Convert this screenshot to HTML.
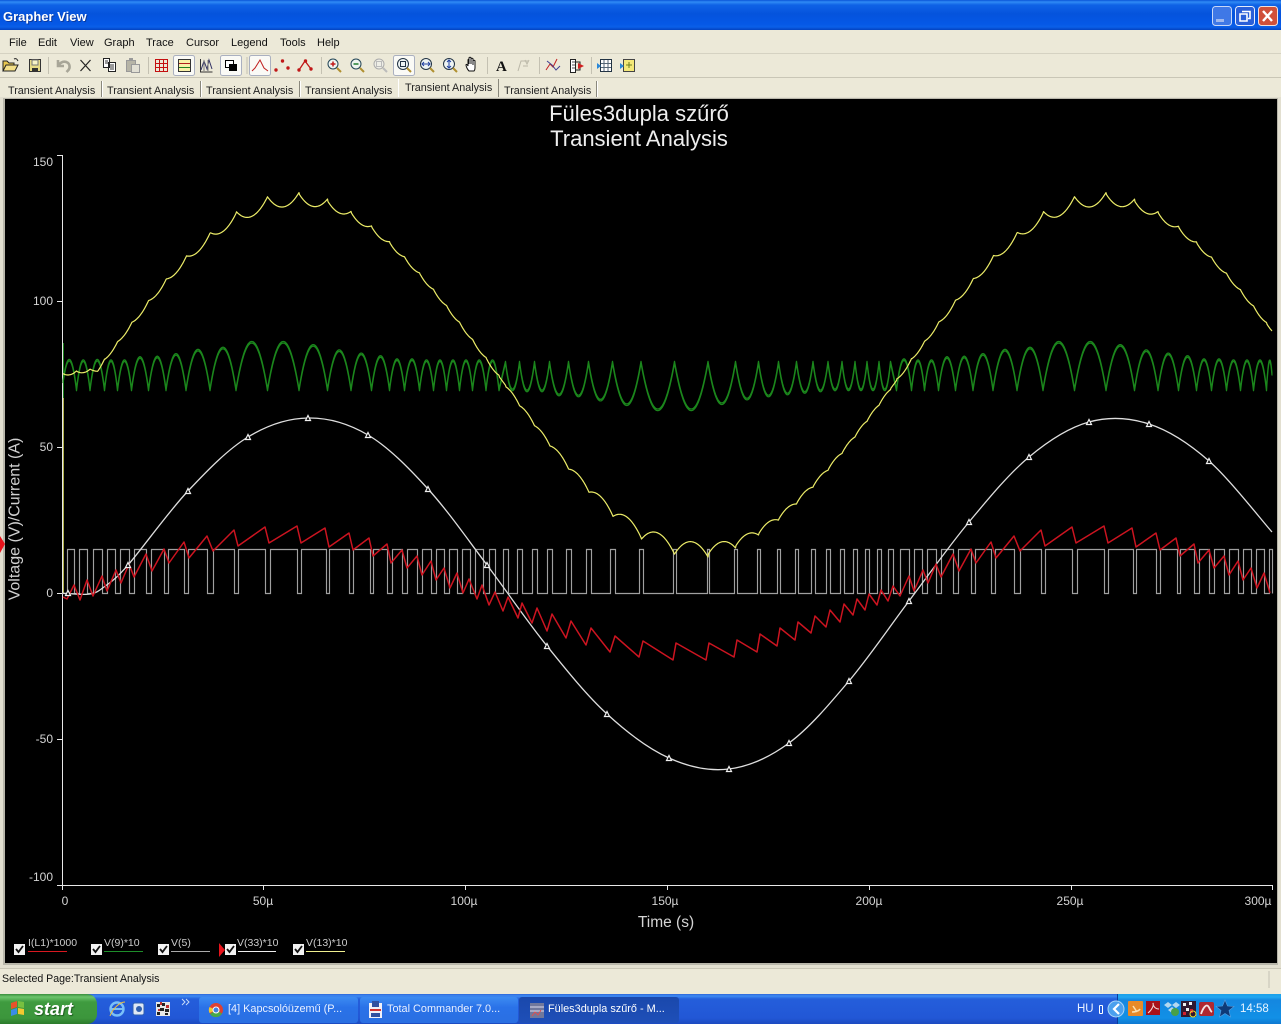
<!DOCTYPE html>
<html>
<head>
<meta charset="utf-8">
<title>Grapher View</title>
<style>
html,body{margin:0;padding:0;background:#ece9d8;}
body{width:1281px;height:1024px;position:relative;overflow:hidden;font-family:"Liberation Sans",sans-serif;}
.a{position:absolute;white-space:nowrap;}
#title{left:0;top:0;width:1281px;height:30px;background:linear-gradient(#0a55d8 0,#2f8bf5 2px,#0f62e6 5px,#0553dc 14px,#0558e6 24px,#0a5fe8 27px,#0342c0 30px);}
.m{font-size:11px;color:#111;top:36px;line-height:13px;}
.t{font-size:10.8px;color:#222;top:84px;line-height:13px;}
.s{top:81px;width:1px;height:16px;background:#8a887c;border-right:1px solid #fff;}
#chart{left:5px;top:99px;width:1272px;height:864px;background:#000;}
.yl{color:#d4d4d4;font-size:12px;width:40px;text-align:right;left:14px;line-height:14px;}
.xl{color:#d4d4d4;font-size:12px;top:894px;line-height:14px;text-align:center;width:50px;}
.lg{color:#ccc;font-size:10.5px;top:937px;line-height:12px;}
.tb{top:997px;height:26px;border-radius:3px;color:#e8f0ff;font-size:10.9px;line-height:25px;box-sizing:border-box;background:linear-gradient(#3d8bf2,#2a72e8 40%,#2a6fe2);}
</style>
</head>
<body>
<div class="a" id="title"></div>
<div class="a" style="left:3px;top:9px;color:#fff;font-weight:bold;font-size:13px;line-height:15px;text-shadow:1px 1px 0 #0a3aa0;">Grapher View</div>
<svg class="a" style="left:1210px;top:4px" width="71" height="24" viewBox="0 0 71 24">
<rect x="2.5" y="2.5" width="19" height="19" rx="3" fill="#3f78e6" stroke="#c8d8f8"/>
<rect x="6" y="15" width="8" height="3" fill="#9fb8ee"/>
<rect x="25.5" y="2.5" width="19" height="19" rx="3" fill="#2a5fd8" stroke="#e4ecfc"/>
<path d="M32 7.5h8v7h-2M30 10h7v7h-7z" fill="none" stroke="#fff" stroke-width="1.6"/>
<rect x="48.5" y="2.5" width="19" height="19" rx="3" fill="#d0503a" stroke="#f0e0dc"/>
<path d="M53 7l9 10M62 7l-9 10" stroke="#fff" stroke-width="2.4"/>
</svg>
<div class="a" style="left:0;top:30px;width:1281px;height:23px;background:#ece9d8;"></div>
<div class="a m" style="left:9px;top:37px">File</div>
<div class="a m" style="left:38px;top:37px">Edit</div>
<div class="a m" style="left:70px;top:37px">View</div>
<div class="a m" style="left:104px;top:37px">Graph</div>
<div class="a m" style="left:146px;top:37px">Trace</div>
<div class="a m" style="left:186px;top:37px">Cursor</div>
<div class="a m" style="left:231px;top:37px">Legend</div>
<div class="a m" style="left:280px;top:37px">Tools</div>
<div class="a m" style="left:317px;top:37px">Help</div>
<div class="a" style="left:0;top:53px;width:1281px;height:1px;background:#d5d2c2;"></div>
<div class="a" style="left:0;top:77px;width:1281px;height:1px;background:#c9c6b6;"></div>

<svg class="a" style="left:0;top:54px" width="660" height="23" viewBox="0 54 660 23">
<g fill="#fafaf6" stroke="#aab0c0">
<rect x="173.500" y="55.500" width="21" height="20" rx="2"/><rect x="220.500" y="55.500" width="21" height="20" rx="2"/>
<rect x="249.500" y="55.500" width="21" height="20" rx="2"/><rect x="393.500" y="55.500" width="21" height="20" rx="2"/>
</g>
<g stroke="#c4c1b2"><path d="M48.500 57v17M148.500 57v17M247 57v17M321.500 57v17M487.500 57v17M539.500 57v17M591.500 57v17"/></g>
<!-- open -->
<path d="M3 71V61h4l2 2h5v2" fill="#e8c850" stroke="#222"/><path d="M3 71l3-6h12l-3 6z" fill="#f4e088" stroke="#222"/><path d="M14 59c2-1 3 0 4 2" stroke="#222" fill="none"/>
<!-- save -->
<rect x="29.500" y="59.500" width="11" height="12" fill="#e8dc88" stroke="#333"/><rect x="32" y="60" width="6" height="5" fill="#f8f4c8" stroke="#777"/><rect x="32" y="68" width="6" height="3" fill="#333"/>
<!-- undo -->
<path d="M58 60v6h6M58.500 65c5-6 12-3 11 3-.5 2-2 3-3 4" fill="none" stroke="#a8a698" stroke-width="2.600"/>
<!-- cut -->
<path d="M80.500 60l10 11M90.500 60l-10 11" stroke="#222" stroke-width="1.200"/>
<!-- copy -->
<path d="M103.500 58.500h6v9h-6zM108.500 62.500h7v9h-7z" fill="#fff" stroke="#222"/><path d="M105 61h3M105 63h3M110 65h4M110 67h4M110 69h4" stroke="#333"/>
<!-- paste -->
<rect x="126.500" y="60.500" width="9" height="11" fill="#b6b4a6" stroke="#999"/><rect x="131.500" y="64.500" width="8" height="8" fill="#e2e0d4" stroke="#999"/><rect x="129" y="58" width="4" height="3" fill="#999"/>
<!-- grid -->
<path d="M155 59.500h13M155 63.500h13M155 67.500h13M155 71.500h13M155.500 59v13M159.500 59v13M163.500 59v13M167.500 59v13" stroke="#c41010"/>
<!-- legend -->
<rect x="178.500" y="59.500" width="12" height="12" fill="#f8f0a8" stroke="#333"/><path d="M179 63.500h11" stroke="#b02020"/><path d="M179 67.500h11" stroke="#208020"/>
<!-- traces -->
<path d="M200.500 59v13h12" fill="none" stroke="#333"/><path d="M201 70l3-9 3 8 2-9 3 9" fill="none" stroke="#336"/><path d="M204 60v11M208 60v11" stroke="#777"/>
<!-- bw -->
<rect x="225.500" y="60.500" width="8" height="7" fill="#fff" stroke="#000"/><rect x="229" y="64" width="8" height="7" fill="#000"/>
<!-- curve -->
<path d="M252 71l3-3 5-8 4 8 4 3" fill="none" stroke="#c02020"/>
<!-- dots -->
<g fill="#c01818"><circle cx="276" cy="70" r="1.700"/><circle cx="282.500" cy="61" r="1.700"/><circle cx="288" cy="68" r="1.700"/>
<circle cx="299" cy="70" r="1.700"/><circle cx="305.500" cy="61" r="1.700"/><circle cx="311" cy="69" r="1.700"/></g>
<path d="M299 70l6-9 6 8" fill="none" stroke="#c01818" stroke-width="1.300"/>
<!-- zooms -->
<g fill="#eef4f0" stroke="#245"><circle cx="333" cy="64" r="5"/><circle cx="356" cy="64" r="5"/></g>
<path d="M330.500 64h5" stroke="#c01818" stroke-width="1.500"/><path d="M333 61.500v5" stroke="#c01818" stroke-width="1.500"/>
<path d="M353.500 64h5" stroke="#208030" stroke-width="1.500"/>
<path d="M337 68l4 4M360 68l4 4" stroke="#b09030" stroke-width="2"/>
<circle cx="379" cy="64" r="5" fill="#eeeee6" stroke="#aaa"/><path d="M383 68l4 4" stroke="#bbb" stroke-width="2"/><rect x="376.500" y="61.500" width="5" height="5" fill="none" stroke="#bbb"/>
<circle cx="403" cy="64" r="5.500" fill="#eef4f4" stroke="#234"/><rect x="400.500" y="61.500" width="5" height="5" fill="none" stroke="#234"/><path d="M407 68l4 4" stroke="#b09030" stroke-width="2"/>
<circle cx="426" cy="64" r="5.500" fill="#eef4f4" stroke="#234"/><path d="M422 64h8" stroke="#2040a0"/><path d="M424 62l-2 2 2 2M428 62l2 2-2 2" fill="none" stroke="#2040a0"/><path d="M430 68l4 4" stroke="#b09030" stroke-width="2"/>
<circle cx="449" cy="64" r="5.500" fill="#eef4f4" stroke="#234"/><path d="M449 60v8M447 62l2-2 2 2M447 66l2 2 2-2" fill="none" stroke="#2040a0"/><path d="M453 68l4 4" stroke="#b09030" stroke-width="2"/>
<!-- hand -->
<path d="M469 71c-2-2-3-5-3-6s1-1 2 1v-6c0-1 1-1 1 0v4-6c0-1 2-1 2 0v6-5c0-1 2-1 2 0v6-4c0-1 2-1 2 0v7c0 2-1 3-1 3z" fill="#fff" stroke="#111"/>
<!-- A -->
<text x="496" y="71" font-family="Liberation Serif,serif" font-weight="bold" font-size="15" fill="#111">A</text>
<path d="M518 71l3-10h7M523 66h5" fill="none" stroke="#bbb8a8"/><path d="M525 60l2 4 2-4" fill="none" stroke="#bbb8a8"/>
<!-- trace edit -->
<path d="M546 70l4-6 3 3 4-8" fill="none" stroke="#c02020"/><path d="M547 61l5 4 4 5 4-4" fill="none" stroke="#404090"/>
<path d="M570.500 59.500h5v13h-5z" fill="#fff" stroke="#222"/><path d="M576 62h4v3M576 70h4v-3" fill="none" stroke="#222"/><path d="M578 63l6 3-6 3z" fill="#d02020"/><path d="M572 62h3M572 65h3M572 68h3" stroke="#555"/>
<!-- export -->
<rect x="600.500" y="59.500" width="11" height="12" fill="#fff" stroke="#234"/><path d="M604 60v11M608 60v11M601 63.500h10M601 67.500h10" stroke="#567"/><path d="M597 63l4 3-4 3z" fill="#2a88d8"/>
<rect x="623.500" y="59.500" width="11" height="12" fill="#f4e878" stroke="#444"/><path d="M626 65h6M629 62v6" stroke="#708020"/><path d="M620 63l4 3-4 3z" fill="#2a88d8"/>
</svg>

<div class="a t" style="left:8px;top:85px">Transient Analysis</div><div class="a s" style="left:101px"></div>
<div class="a t" style="left:107px;top:85px">Transient Analysis</div><div class="a s" style="left:200px"></div>
<div class="a t" style="left:206px;top:85px">Transient Analysis</div><div class="a s" style="left:299px"></div>
<div class="a t" style="left:305px;top:85px">Transient Analysis</div>
<div class="a" style="left:398px;top:79px;width:101px;height:20px;background:#ece9d8;border-left:1px solid #fff;border-right:1px solid #8a887c;box-sizing:border-box;"></div>
<div class="a t" style="left:405px;top:82px">Transient Analysis</div>
<div class="a t" style="left:504px;top:85px">Transient Analysis</div><div class="a s" style="left:596px"></div>

<div class="a" style="left:0;top:97px;width:1281px;height:871px;background:#e2dfd0;"></div>
<div class="a" style="left:3px;top:98px;width:1275px;height:867px;background:#b8b6aa;"></div>
<div class="a" id="chart"></div>

<svg class="a" style="left:0;top:0;pointer-events:none" width="1281" height="1024" viewBox="0 0 1281 1024" fill="none">
<path d="M0 536l5 8-5 9z" fill="#e8141c"/>
<path d="M63 375V593" stroke="#e8e860" stroke-width="1.500"/>
<path d="M63 343V398" stroke="#1a7f1a" stroke-width="2"/>
<path d="M62.500 155V885.500H1272.500M57 155.500h5M57 301.500h5M57 447.500h5M57 593.500h5M57 739.500h5M57 885.500h5M62.500 885v5M263.500 885v5M465.500 885v5M667.500 885v5M869.500 885v5M1071.500 885v5M1272.500 885v5" stroke="#e8e8e8"/>
<path id="pg" stroke="#1b861c" stroke-width="1.300" stroke-linejoin="round"/>
<path id="ps" stroke="#a0a0a0" stroke-width="1.150"/>
<path id="py" stroke="#ecec68" stroke-width="1.200" stroke-linejoin="round"/>
<path id="pw" stroke="#dedede" stroke-width="1.300" stroke-linejoin="round"/>
<path id="pr" stroke="#cc1420" stroke-width="1.500" stroke-linejoin="round"/>
<g id="mk" stroke="#efefef" stroke-width="1.200"></g>
<path d="M219 943l6 7-6 7z" fill="#e8141c"/>
<!-- legend checks -->
<g>
<rect x="14" y="944" width="11" height="11" fill="#f2f2f2"/><rect x="91" y="944" width="11" height="11" fill="#f2f2f2"/><rect x="158" y="944" width="11" height="11" fill="#f2f2f2"/><rect x="225" y="944" width="11" height="11" fill="#f2f2f2"/><rect x="293" y="944" width="11" height="11" fill="#f2f2f2"/>
<path d="M16 949l2.500 3 4.500-6M93 949l2.500 3 4.500-6M160 949l2.500 3 4.500-6M227 949l2.500 3 4.500-6M295 949l2.500 3 4.500-6" stroke="#111" stroke-width="1.800"/>
</g>
<path d="M28 951.500h39" stroke="#d81820"/>
<path d="M104 951.500h39" stroke="#1e8e2a"/>
<path d="M171 951.500h39" stroke="#aaa"/>
<path d="M238 951.500h38" stroke="#eee"/>
<path d="M306 951.500h39" stroke="#f0f090"/>
</svg>

<div class="a" style="left:0;top:0;width:1281px;height:1024px;pointer-events:none;">
<div class="a" style="left:439px;top:101px;width:400px;text-align:center;color:#eeeeee;font-size:22px;line-height:25px;">Füles3dupla szűrő</div>
<div class="a" style="left:439px;top:126px;width:400px;text-align:center;color:#eeeeee;font-size:22px;line-height:25px;">Transient Analysis</div>
<div class="a yl" style="left:13px;top:155px">150</div>
<div class="a yl" style="left:13px;top:294px">100</div>
<div class="a yl" style="left:13px;top:440px">50</div>
<div class="a yl" style="left:13px;top:586px">0</div>
<div class="a yl" style="left:13px;top:732px">-50</div>
<div class="a yl" style="left:13px;top:870px">-100</div>
<div class="a" style="left:-67px;top:510px;width:165px;height:18px;line-height:18px;text-align:center;color:#d0d0d0;font-size:16px;transform:rotate(-90deg);">Voltage (V)/Current (A)</div>
<div class="a xl" style="left:40px">0</div>
<div class="a xl" style="left:238px">50µ</div>
<div class="a xl" style="left:439px">100µ</div>
<div class="a xl" style="left:640px">150µ</div>
<div class="a xl" style="left:844px">200µ</div>
<div class="a xl" style="left:1045px">250µ</div>
<div class="a xl" style="left:1233px">300µ</div>
<div class="a" style="left:566px;top:914px;width:200px;text-align:center;color:#d4d4d4;font-size:15.500px;line-height:18px;">Time (s)</div>
<div class="a lg" style="left:28px">I(L1)*1000</div>
<div class="a lg" style="left:104px">V(9)*10</div>
<div class="a lg" style="left:171px">V(5)</div>
<div class="a lg" style="left:237px">V(33)*10</div>
<div class="a lg" style="left:306px">V(13)*10</div>
</div>

<div class="a" style="left:0;top:968px;width:1281px;height:22px;background:#ece9d8;border-top:1px solid #c9c6b6;box-sizing:border-box;"></div>
<div class="a" style="left:2px;top:973px;font-size:10.6px;line-height:13px;color:#111;">Selected Page:Transient Analysis</div>
<div class="a" style="left:1268px;top:971px;width:2px;height:17px;background:#d8d5c6;"></div>

<div class="a" style="left:0;top:994px;width:1281px;height:30px;background:linear-gradient(#2c66d8 0,#3f8cf3 2px,#245edb 5px,#2257d6 24px,#1c4ac0 30px);"></div>
<div class="a" style="left:0;top:994px;width:97px;height:30px;border-radius:0 10px 10px 0;background:linear-gradient(#388e3c 0,#6cc46c 3px,#3f9b3f 8px,#3c963c 24px,#2b7a2b 30px);"></div>
<svg class="a" style="left:0;top:994px" width="200" height="30" viewBox="0 0 200 30">
<path d="M11 9l6-2v6l-6 2z" fill="#e8522a"/><path d="M18 7l6 1v6l-6-1z" fill="#78c040"/><path d="M11 16l6-2v6l-6 2z" fill="#3a8ce8"/><path d="M18 14l6 1v6l-6-1z" fill="#f4c830"/>
<circle cx="117" cy="15" r="6.500" fill="none" stroke="#7ac0f8" stroke-width="2.400"/><path d="M111 15h12" stroke="#7ac0f8" stroke-width="2"/><path d="M110 22c3-8 10-14 15-14" fill="none" stroke="#f0c040"/>
<rect x="133" y="9" width="11" height="12" rx="2" fill="#dfe8f4" stroke="#3060b0"/><circle cx="139" cy="15" r="3" fill="#3060b0"/>
<rect x="156" y="8" width="14" height="14" fill="#e8e8e8"/><path d="M157 10h3v3h-3zM162 9h3v3h-3zM160 14h4v3h-4zM165 15h4v3h-4zM157 18h3v3h-3zM165 19h3v2h-3z" fill="#222"/><path d="M160 8h2v3h-2zM166 11h3v3h-3zM158 15h2v2h-2z" fill="#c03030"/>
<path d="M182 5l3 3-3 3M186 5l3 3-3 3" fill="none" stroke="#c8dcf8"/>
</svg>
<div class="a" style="left:34px;top:998px;color:#fff;font-style:italic;font-weight:bold;font-size:18px;line-height:22px;text-shadow:1px 1px 1px #1c5c1c;">start</div>

<div class="a tb" style="left:199px;width:159px;padding-left:29px;">[4] Kapcsolóüzemű (P...</div>
<div class="a tb" style="left:360px;width:158px;padding-left:27px;">Total Commander 7.0...</div>
<div class="a tb" style="left:519px;width:160px;padding-left:29px;background:linear-gradient(#1a48ac,#1e4fb8);color:#fff;">Füles3dupla szűrő - M...</div>
<svg class="a" style="left:199px;top:997px" width="480" height="26" viewBox="199 997 480 26">
<circle cx="216" cy="1010" r="7" fill="#e04030"/><path d="M216 1010l6 3.500a7 7 0 0 1-12 0.500z" fill="#48a848"/><path d="M216 1010l-6.500 3a7 7 0 0 1 0-6z" fill="#f0c830"/><circle cx="216" cy="1010" r="3" fill="#4080e0" stroke="#fff"/>
<rect x="369" y="1003" width="13" height="15" fill="#f0f0f8"/><rect x="372" y="1001" width="7" height="6" fill="#3050a0"/><path d="M370 1010h11" stroke="#d03030" stroke-width="2"/><rect x="371" y="1013" width="9" height="4" fill="#3050a0"/>
<rect x="530" y="1003" width="14" height="15" fill="#70789c"/><path d="M530 1007h14M530 1011h14" stroke="#dde"/><path d="M532 1016l3-4 3 3 3-5" fill="none" stroke="#e05050"/>
</svg>

<div class="a" style="left:1117px;top:994px;width:164px;height:30px;background:linear-gradient(#1ba0e8 0,#22a8f2 3px,#1487e0 6px,#1290e6 24px,#0f78d0 30px);border-left:1px solid #0c3c9c;box-sizing:border-box;"></div>
<div class="a" style="left:1077px;top:1002px;color:#e8f0ff;font-size:11.500px;line-height:14px;">HU</div>
<div class="a" style="left:1099px;top:1005px;width:4px;height:9px;border:1px solid #fff;border-radius:1px;box-sizing:border-box;"></div>
<svg class="a" style="left:1106px;top:995px" width="130" height="28" viewBox="1106 995 130 28">
<circle cx="1116" cy="1009" r="8" fill="#4aa0ee" stroke="#a8d4f8"/><path d="M1119 1004l-5 5 5 5" fill="none" stroke="#fff" stroke-width="2.200"/>
<rect x="1128" y="1001" width="15" height="15" rx="1" fill="#e88a28"/><path d="M1132 1012c3 0 7-1 8-3M1133 1006l4 6" stroke="#fbe0b0" stroke-width="1.500" fill="none"/>
<rect x="1146" y="1001" width="14" height="14" fill="#a81018"/><path d="M1148 1013c4-3 6-8 5-10 0 3 2 6 6 6" fill="none" stroke="#f0d8d8"/>
<path d="M1164 1005l4-3 4 3-4 3zM1172 1005l4-3 4 3-4 3zM1168 1010l4-3 4 3-4 3z" fill="#b4d8f0"/><circle cx="1175" cy="1012" r="4" fill="#48a048"/>
<rect x="1181" y="1001" width="15" height="16" fill="#301830"/><path d="M1183 1003h3v3h-3zM1189 1002h3v3h-3zM1186 1008h3v3h-3z" fill="#eee"/><path d="M1190 1009h3v4h-3zM1183 1012h3v3h-3z" fill="#d02030"/><circle cx="1193" cy="1014" r="3" fill="none" stroke="#e8e030"/>
<rect x="1199" y="1002" width="15" height="14" rx="2" fill="#b02830"/><path d="M1201 1014c2-6 5-10 7-8s2 5 4 6" fill="none" stroke="#f4e4e4" stroke-width="1.800"/>
<path d="M1225 1000l2.500 6 6.500.5-5 4 1.500 6.500-5.500-3.500-5.500 3.500 1.500-6.500-5-4 6.500-.5z" fill="#0e3a78" stroke="#5aa0e0" stroke-width=".6"/>
</svg>
<div class="a" style="left:1240px;top:1002px;color:#e8f4ff;font-size:11.500px;line-height:14px;">14:58</div>

<script>
(function(){
var H=[[67,74],[79,87],[93,102],[107,115],[120,129],[134,146],[151,164],[168,184],[188,207],[213,234],[238,265],[270,297],[301,326],[329,349],[353,370],[373,387],[392,402],[407,417],[422,431],[436,444],[449,457],[462,470],[475,483],[489,495],[503,508],[517,522],[532,537],[547,552],[566,571],[586,591],[610,615],[639,643],[673,676],[707,709],[734,737],[757,760],[777,780],[795,798],[811,815],[826,830],[840,844],[853,857],[865,869],[877,881],[888,893],[900,909],[914,922],[927,936],[941,953],[958,971],[975,991],[995,1014],[1020,1041],[1045,1072],[1077,1104],[1108,1133],[1136,1156],[1160,1177],[1180,1194],[1199,1209],[1214,1224],[1229,1238],[1243,1251],[1256,1264],[1269,1272]];
var i,d;
/* square */
d="M62 593.5";
for(i=0;i<H.length;i++){d+="L"+(H[i][0]+.5)+" 593.5V549.5H"+(H[i][1]+.5)+"V593.5";}
document.getElementById("ps").setAttribute("d",d);
/* cusps */
var C=[{x:62,s:1},{x:896.5,s:1}];
for(i=0;i<H.length-1;i++){
 var lowC=(H[i][1]+H[i+1][0])/2, hiC=(H[i][0]+H[i][1])/2;
 if(hiC<495){C.push({x:lowC,s:1});}
 else if(hiC<895){C.push({x:hiC,s:-1});}
 else{C.push({x:lowC,s:1});}
}
C.push({x:1273,s:1});
C.sort(function(a,b){return a.x-b.x;});
function seg(x){for(var k=0;k<C.length-1;k++){if(x>=C[k].x&&x<=C[k+1].x){var p=C[k+1].x-C[k].x;return{p:p,u:2*(x-C[k].x)/p-1,s0:C[k].s,s1:C[k+1].s};}}return{p:14,u:0,s0:1,s1:1};}
function cl(v){return v<0?0:(v>1?1:v);}
function Y(v){return 593.5-2.92*v;}
var g="",g2="",y="";
for(var x=63;x<=1272;x+=.5){
 var q=seg(x),u2=q.u*q.u,v,r;
 var A=4.8*Math.pow(Math.min(q.p,36)/32,2);
 if(q.s0!==q.s1){
  var f=(q.u+1)/2;
  v=q.s0>0?70+9.5*f:79.5-9.5*f;
  r=0;
 }else if(q.s1>0){
  var vp=80+cl((q.p-14)/18)*6.5;v=70+(vp-70)*(1-u2);
  r=A*(u2-.5);
 }else{
  var vm=70-cl((q.p-14)/20)*7;v=79.5-(79.5-vm)*(1-u2);
  r=A*(.5-u2);
 }
 g+=(g?"L":"M")+x+" "+Y(v).toFixed(1);
 g2+=(g2?"L":"M")+x+" "+(Y(v)+1.6).toFixed(1);
 var t=(x-62)*300/1210;
 var b=t<8?75+t*.2:75+60*Math.sin(2*Math.PI*(t-8)/200);
 if(t>=8&&t<16){b=Math.max(b,76.600);}
 y+=(y?"L":"M")+x+" "+Y(b+r).toFixed(1);
}
document.getElementById("pg").setAttribute("d",g+g2);
document.getElementById("py").setAttribute("d",y);
/* white: Catmull-Rom through measured points */
var M=[[68,593],[128,565],[188,491],[248,437],[308,418],[368,435],[428,489],[487,565],[547,646],[607,714],[669,758],[729,769],[789,743],[849,681],[909,601],[969,522],[1029,457],[1089,422],[1149,424],[1209,461]];
var W=[[62,593],[68,593.5],[90,594],[104,587]].concat(M.slice(1)).concat([[1272,532]]);
var w="M"+W[0][0]+" "+W[0][1];
for(i=0;i<W.length-1;i++){
 var p0=W[Math.max(i-1,0)],p1=W[i],p2=W[i+1],p3=W[Math.min(i+2,W.length-1)];
 w+="C"+(p1[0]+(p2[0]-p0[0])/6).toFixed(1)+" "+(p1[1]+(p2[1]-p0[1])/6).toFixed(1)+" "+(p2[0]-(p3[0]-p1[0])/6).toFixed(1)+" "+(p2[1]-(p3[1]-p1[1])/6).toFixed(1)+" "+p2[0]+" "+p2[1];
}
document.getElementById("pw").setAttribute("d",w);
var mk="";
for(i=0;i<M.length;i++){var mx=M[i][0],my=M[i][1];mk+='<path fill="#000" d="M'+(mx-2.5)+" "+(my+2.5)+"h5l-2.500-5z\"/>";}
document.getElementById("mk").innerHTML=mk;
/* red */
var R=[[63,597],[67,599],[74,585],[80,600],[87,580],[93,596],[102,576],[107,591],[116,570],[121,583],[129,564],[134,577],[146,554],[152,571],[164,549],[169,563],[184,542],[189,558],[207,536],[213,551],[234,530],[238,546],[265,527],[269,543],[297,526],[301,543],[325,528],[329,547],[349,533],[353,550],[369,538],[373,556],[387,544],[391,563],[402,550],[407,568],[417,556],[422,575],[431,561],[436,580],[444,568],[450,588],[457,573],[463,593],[469,579],[477,599],[482,585],[489,605],[495,592],[503,611],[508,597],[518,618],[522,603],[532,623],[537,608],[547,631],[552,614],[566,638],[571,621],[586,645],[591,628],[610,652],[615,636],[639,657],[643,641],[673,660],[676,643],[706,660],[709,643],[734,657],[737,640],[757,652],[760,634],[777,646],[780,628],[795,640],[798,622],[811,633],[815,616],[826,627],[830,610],[840,622],[844,604],[853,615],[857,599],[865,610],[869,594],[877,605],[881,590],[888,601],[893,586]];
for(i=5;i<45;i++){R.push([R[i][0]+807,R[i][1]]);}
var e="";
for(i=0;i<R.length;i++){if(R[i][0]>1272)break;e+=(i?"L":"M")+R[i][0]+" "+R[i][1];}
document.getElementById("pr").setAttribute("d",e);
})();
</script>
</body>
</html>
